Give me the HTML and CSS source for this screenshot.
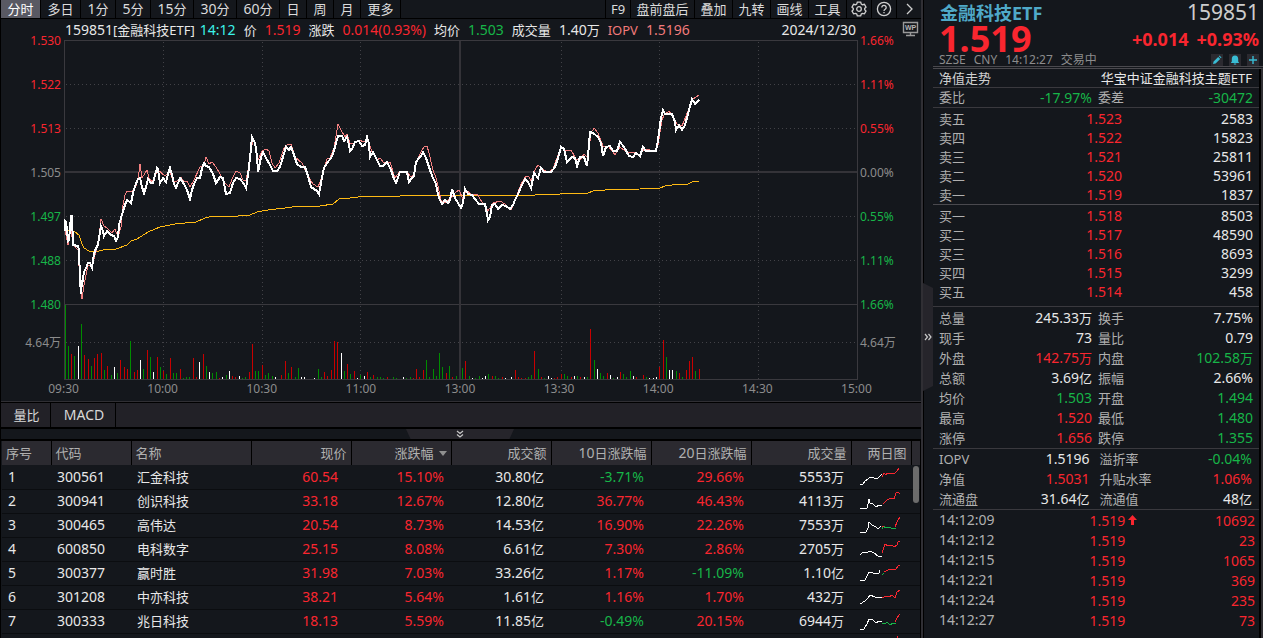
FILE: index.html
```html
<!DOCTYPE html>
<html lang="zh-CN">
<head>
<meta charset="utf-8">
<meta name="viewport" content="width=device-width, initial-scale=1">
<title>金融科技ETF 159851</title>
<link rel="stylesheet" href="styles.css">
</head>
<body>
<div class="terminal">
<main class="main">
  <nav class="toolbar">
    <button class="tool two active">分时</button><button class="tool two">多日</button><button class="tool mid"><span class="n">1</span>分</button><button class="tool mid"><span class="n">5</span>分</button><button class="tool long"><span class="n">15</span>分</button><button class="tool long"><span class="n">30</span>分</button><button class="tool long"><span class="n">60</span>分</button><button class="tool one">日</button><button class="tool one">周</button><button class="tool one">月</button><button class="tool two">更多</button>
    <span class="spacer"></span>
    <button class="tool small">F9</button><button class="tool wide">盘前盘后</button><button class="tool pair">叠加</button><button class="tool pair">九转</button><button class="tool pair">画线</button><button class="tool pair">工具</button>
    <button class="tool icon" aria-label="设置"><svg width="16" height="16" viewBox="0 0 16 16"><path d="M6.300 1.200h3.400l.6 1.900 1.100.6 2-.4 1.600 2.900-1.300 1.200v1.300l1.300 1.300-1.600 2.800-2-.4-1.100.6-.6 1.800H6.300l-.6-1.800-1.100-.6-2 .4L1 10l1.300-1.300V7.400L1 6.200l1.600-2.900 2 .4 1.100-.6z"/><circle cx="8" cy="8" r="2.300"/></svg></button>
    <button class="tool icon" aria-label="帮助"><svg width="16" height="16" viewBox="0 0 16 16"><circle cx="8" cy="8" r="6.600"/><path d="M5.800 6.500a2.200 2.100 0 1 1 3.400 1.700c-.8.5-1.200.8-1.200 1.700M8 11v1.300"/></svg></button>
    <button class="tool icon last" aria-label="展开"><svg width="16" height="16" viewBox="0 0 16 16"><path d="M6 3l5 5-5 5"/></svg></button>
  </nav>

  <section class="chart">
    <div class="axis axis-left"><span class="up">1.530</span><span class="up">1.522</span><span class="up">1.513</span><span>1.505</span><span class="down">1.497</span><span class="down">1.488</span><span class="down">1.480</span><span class="vol">4.64万</span></div>
    <div class="center">
      <div class="info">
        <span class="name"><span class="n">159851</span>[金融科技ETF]</span><span class="n cyan">14:12</span>
        <span>价</span><span class="n up">1.519</span><span>涨跌</span><span class="n up">0.014(0.93%)</span><span>均价</span><span class="n down">1.503</span><span>成交量</span><span><span class="n">1.40</span>万</span><span class="pink">IOPV</span><span class="n pink">1.5196</span>
        <time class="n date">2024/12/30</time>
      </div>
      <svg class="plot" viewBox="64 40 794 340" preserveAspectRatio="none" role="img" aria-label="分时走势图">
        <g class="dots"><path d="M66 84.500H857M66 128.500H857M66 216.500H857M66 260.500H857M66 342.500H857"/><path d="M163.500 42V379M262.500 42V379M360.500 42V379M561.500 42V379M659.500 42V379M758.500 42V379"/></g>
        <path class="frame" d="M64.500 379.500V40.500H857.500V379.500ZM64 304.500H857"/>
        <path class="axis-line" d="M65 172H857M460 41V379"/>
        <g class="bars" transform="translate(0 200) scale(.33333)">
          <path class="bar-up" d="M214 537V462M253 537V465M265 537V477M283 537V474M292 537V462M304 537V459M322 537V498M361 537V480M373 537V501M382 537V507M403 537V516M412 537V510M442 537V450M472 537V471M490 537V513M511 537V474M541 537V507M580 537V474M589 537V531M610 537V462M658 537V534M697 537V528M706 537V531M748 537V516M757 537V432M787 537V495M844 537V525M856 537V483M874 537V501M973 537V516M982 537V528M994 537V510M1003 537V423M1012 537V426M1042 537V492M1063 537V513M1102 537V516M1120 537V525M1162 537V531M1240 537V534M1249 537V507M1258 537V531M1271 537V510M1340 537V519M1358 537V531M1397 537V483M1478 537V528M1508 537V531M1547 537V510M1556 537V531M1565 537V534M1577 537V534M1604 537V453M1625 537V531M1664 537V534M1673 537V531M1685 537V522M1715 537V531M1742 537V531M1772 537V387M1823 537V519M1862 537V516M1910 537V531M1931 537V525M1979 537V501M1991 537V420M2039 537V519M2060 537V510M2069 537V483M2078 537V471M2099 537V507"/>
          <path class="bar-down" d="M196 537V315M205 537V438M223 537V468M244 537V372M274 537V498M313 537V510M334 537V525M352 537V519M391 537V423M430 537V507M451 537V471M481 537V501M499 537V522M520 537V519M529 537V519M550 537V534M559 537V531M568 537V531M619 537V498M637 537V519M649 537V516M679 537V525M727 537V534M736 537V531M766 537V513M775 537V513M796 537V525M805 537V519M817 537V528M865 537V519M886 537V531M895 537V504M955 537V507M964 537V531M1033 537V513M1051 537V522M1081 537V525M1111 537V531M1132 537V531M1141 537V531M1150 537V534M1180 537V531M1189 537V534M1219 537V534M1231 537V531M1280 537V480M1289 537V531M1301 537V507M1310 537V528M1319 537V459M1328 537V501M1349 537V498M1370 537V528M1388 537V504M1409 537V528M1427 537V534M1439 537V528M1466 537V522M1487 537V528M1496 537V534M1586 537V531M1595 537V525M1616 537V507M1634 537V534M1694 537V522M1703 537V528M1733 537V528M1763 537V531M1784 537V480M1802 537V519M1811 537V528M1841 537V534M1871 537V522M1880 537V531M1892 537V513M1940 537V531M2000 537V471M2030 537V513M2048 537V531M2087 537V513"/>
          <path class="bar-flat" d="M235 537V438M343 537V501M421 537V480M460 537V516M598 537V486M628 537V516M667 537V531M688 537V513M718 537V528M826 537V531M904 537V531M913 537V531M943 537V534M1024 537V459M1072 537V534M1093 537V528M1210 537V531M1418 537V534M1448 537V534M1457 537V528M1517 537V534M1535 537V531M1646 537V528M1655 537V534M1724 537V528M1754 537V531M1793 537V507M1832 537V525M1853 537V531M1901 537V528M1949 537V534M1961 537V534M1970 537V531M2009 537V510M2018 537V510"/>
        </g>
        <polyline class="avg" points="65,229 75,232 79,235 82,244 84,248 89,251 95,252 103,250 116,249 127,245 131,241 137,239 148,232 160,227 175,224 196,222 205,218 213,216 238,216 250,215 257,212 268,210 285,208 300,206 320,206 333,204 339,199 350,198 366,196 400,196 410,195 535,195 560,194 588,193 593,191 605,190 640,189 660,188 665,186 680,184 688,184 692,182 699,181"/>
        <polyline class="iopv" points="65,231 66,235 68,245 71,228 73,245 78,250 80,282 82,299 84,285 86,275 88,265 92,266 96,252 99,238 101,219 104,226 107,228 112,233 115,229 118,237 121,227 123,205 125,195 127,191 132,191 136,186 138,180 140,164 142,178 147,170 149,178 152,182 158,170 165,176 170,172 173,181 177,181 181,177 184,182 187,181 190,187 193,182 200,167 204,166 206,157 209,164 212,162 216,167 220,174 225,183 229,187 232,179 236,171 240,173 243,180 246,180 250,160 253,138 256,148 258,160 262,151 266,149 269,151 272,163 275,168 279,163 284,148 287,145 291,144 295,157 302,163 308,176 313,184 318,187 322,177 327,159 330,158 334,148 338,124 341,130 345,137 347,134 350,143 354,144 358,140 365,142 368,139 372,152 377,160 380,158 384,163 390,162 395,178 400,171 406,171 411,177 414,175 417,160 422,150 425,146 427,146 429,153 433,170 436,178 438,186 441,200 444,203 450,199 455,193 459,190 463,199 466,190 471,194 477,194 482,202 488,211 493,203 500,201 505,204 511,210 516,198 521,184 526,176 529,177 531,181 535,170 538,165 542,169 548,172 553,169 558,155 562,147 566,151 571,150 576,159 580,160 584,154 588,158 591,133 594,128 598,133 603,146 608,146 613,152 615,155 620,147 628,153 633,152 640,155 644,149 655,151 658,145 662,120 664,115 669,111 673,117 677,124 682,126 686,116 692,100 696,97 699,95"/>
        <polyline class="price" points="65,231 65,221 66,222 67,230 68,241 69,240 71,216 72,216 73,245 78,246 79,250 80,280 81,294 82,280 82,285 84,272 86,268 88,263 90,263 92,268 94,254 96,248 98,245 99,238 101,226 103,231 104,236 107,231 111,235 114,236 116,241 118,237 119,225 121,218 123,211 125,205 127,200 131,203 133,193 135,186 138,179 140,178 142,187 144,193 146,187 148,179 151,183 153,183 155,175 157,168 158,169 160,183 163,178 166,182 168,174 170,168 172,175 174,184 176,188 180,178 184,184 187,190 190,199 192,190 194,184 197,178 200,178 202,168 204,163 206,166 209,167 213,174 216,183 220,177 223,178 226,194 230,193 233,183 236,178 240,179 244,184 246,188 248,175 250,158 252,137 255,143 257,156 258,172 261,157 263,152 266,158 270,165 273,171 277,171 280,167 283,157 286,147 289,150 291,147 293,152 297,164 301,167 305,167 308,176 311,187 314,189 317,191 319,194 321,183 324,168 327,163 331,158 333,154 336,143 338,136 342,136 344,141 347,137 349,145 350,151 352,149 355,142 359,141 362,146 365,145 367,137 369,144 370,157 373,152 376,158 380,166 383,166 387,162 391,170 394,179 396,183 400,172 407,172 409,182 412,178 414,176 416,162 419,158 421,156 423,152 426,158 430,170 433,178 436,184 438,195 440,200 442,204 445,200 448,203 450,200 452,189 455,198 458,203 461,208 463,203 465,189 468,194 472,195 475,199 479,204 485,204 487,214 488,220 490,217 492,205 495,204 498,209 502,205 506,206 510,209 513,205 515,200 518,194 521,187 525,179 528,182 531,188 534,173 538,178 541,168 544,172 551,172 555,167 558,158 561,147 564,149 567,162 572,157 575,158 577,166 580,157 584,157 587,166 589,145 590,132 593,133 598,137 601,143 603,156 606,147 610,146 613,151 617,151 620,142 624,147 629,156 633,157 636,153 640,156 643,147 646,151 656,151 658,140 661,118 663,110 665,114 672,114 675,122 676,130 679,125 682,130 685,125 688,114 692,99 695,104 699,100"/>
      </svg>
    </div>
    <div class="axis axis-right"><span class="up">1.66%</span><span class="up">1.11%</span><span class="up">0.55%</span><span>0.00%</span><span class="down">0.55%</span><span class="down">1.11%</span><span class="down">1.66%</span><span class="vol">4.64万</span></div>
    <button class="wp" aria-label="WP"><svg width="18" height="17" viewBox="0 0 18 17"><path d="M1.500 1.500h14v10h-14zM8.500 12v2.500M4 14.500h9"/><text x="3" y="9">WP</text></svg></button>
  </section>
  <div class="times"><span>09:30</span><span>10:00</span><span>10:30</span><span>11:00</span><span>13:00</span><span>13:30</span><span>14:00</span><span>14:30</span><span>15:00</span></div>

  <div class="tabs"><button class="tab">量比</button><button class="tab macd">MACD</button></div>
  <div class="fold"><button aria-label="收起"><svg width="108" height="11" viewBox="0 0 108 11"><path class="fold-bg" d="M0 0h108l-5 11H5z"/><path class="fold-arrow" d="M51 2l3 2.500 3-2.500M51 5.500l3 2.500 3-2.500"/></svg></button></div>

  <section class="list">
    <table>
      <colgroup><col class="c-no"><col class="c-code"><col><col class="c-num"><col class="c-num"><col class="c-num"><col class="c-num"><col class="c-num"><col class="c-num"><col class="c-spark"><col class="c-bar"></colgroup>
      <thead><tr><th>序号</th><th>代码</th><th>名称</th><th>现价</th><th>涨跌幅<span class="sort"></span></th><th>成交额</th><th><span class="n">10</span>日涨跌幅</th><th><span class="n">20</span>日涨跌幅</th><th>成交量</th><th>两日图</th><th></th></tr></thead>
      <tbody>
      <tr><td>1</td><td>300561</td><td>汇金科技</td><td class="up">60.54</td><td class="up">15.10%</td><td>30.80<i>亿</i></td><td class="down">-3.71%</td><td class="up">29.66%</td><td>5553<i>万</i></td><td><svg viewBox="0 0 42 22"><path d="M1 19l3-1 2-3 3-2 2-2 4 1 3 1 3-3 2-2"/><path class="s-up" d="M23 11l2-4 2 2 1-2h8l2-2 2-3"/></svg></td><td></td></tr>
      <tr><td>2</td><td>300941</td><td>创识科技</td><td class="up">33.18</td><td class="up">12.67%</td><td>12.80<i>亿</i></td><td class="up">36.77%</td><td class="up">46.43%</td><td>4113<i>万</i></td><td><svg viewBox="0 0 42 22"><path d="M1 18h7l1-4 1-5 1 4 3 1 3 3 3-2h3"/><path class="s-up" d="M24 14l4-4 4-2 3 1 2-6 2-1 2 2"/></svg></td><td></td></tr>
      <tr><td>3</td><td>300465</td><td>高伟达</td><td class="up">20.54</td><td class="up">8.73%</td><td>14.53<i>亿</i></td><td class="up">16.90%</td><td class="up">22.26%</td><td>7553<i>万</i></td><td><svg viewBox="0 0 42 22"><path d="M1 18h6l2-4 1-6 3 3 4 2 2 2 3-3"/><path class="s-down" d="M23 15l1-3 3 2 3-1 2 1h5"/><path class="s-up" d="M36 13l2-5 3-5M23 13l2-1"/></svg></td><td></td></tr>
      <tr><td>4</td><td>600850</td><td>电科数字</td><td class="up">25.15</td><td class="up">8.08%</td><td>6.61<i>亿</i></td><td class="up">7.30%</td><td class="up">2.86%</td><td>2705<i>万</i></td><td><svg viewBox="0 0 42 22"><path d="M1 17l3-3 3 1 4-2 4 2 4 3h4"/><path class="s-up" d="M23 15l3-9 3 2 4-1 2 2 3-2 1-3 2-1"/></svg></td><td></td></tr>
      <tr><td>5</td><td>300377</td><td>赢时胜</td><td class="up">31.98</td><td class="up">7.03%</td><td>33.26<i>亿</i></td><td class="up">1.17%</td><td class="down">-11.09%</td><td>1.10<i>亿</i></td><td><svg viewBox="0 0 42 22"><path d="M1 18h5l2-4 2-4 4 1 3 1 3-1 1-3"/><path class="s-down" d="M23 13l2-2"/><path class="s-up" d="M25 10l4-2 4-1h4l2-3 2-1"/></svg></td><td></td></tr>
      <tr><td>6</td><td>301208</td><td>中亦科技</td><td class="up">38.21</td><td class="up">5.64%</td><td>1.61<i>亿</i></td><td class="up">1.16%</td><td class="up">1.70%</td><td>432<i>万</i></td><td><svg viewBox="0 0 42 22"><path d="M1 18l5-3 3-3 2-3 5 2 7 1"/><path class="s-up" d="M23 12l4-2 3 1 3-2 3 3 2-6 3-2"/></svg></td><td></td></tr>
      <tr><td>7</td><td>300333</td><td>兆日科技</td><td class="up">18.13</td><td class="up">5.59%</td><td>11.85<i>亿</i></td><td class="down">-0.49%</td><td class="up">20.15%</td><td>6944<i>万</i></td><td><svg viewBox="0 0 42 22"><path d="M1 19h4l3-5 2-5 4 1 3 3 3-2 3 1"/><path class="s-down" d="M23 13l3 1 2-2 3 3 3-2h3"/><path class="s-up" d="M36 12l2-4 2-3 1-1"/></svg></td><td></td></tr>
      <tr><td></td><td></td><td></td><td></td><td></td><td></td><td></td><td></td><td></td><td><svg viewBox="0 0 42 22"><path class="s-up" d="M37 11l2-9"/></svg></td><td></td></tr>
      </tbody>
    </table>
    <span class="thumb"></span>
  </section>
</main>

<aside class="quote">
  <button class="collapse" aria-label="收起侧栏"><svg width="10" height="108" viewBox="0 0 10 108"><path class="fold-bg" d="M0 0l10 5v98L0 108z"/><path class="fold-arrow" d="M2 51l2.500 3L2 57M5.500 51L8 54l-2.500 3"/></svg></button>
  <header>
    <div class="head-row"><h1>金融科技ETF</h1><span class="code">159851</span></div>
    <div class="head-row price-row"><strong class="last-price">1.519</strong><span class="delta"><b>+0.014</b><b>+0.93%</b></span></div>
    <div class="head-row meta"><span>SZSE</span><span>CNY</span><span>14:12:27</span><span class="state">交易中</span>
      <span class="spacer"></span>
      <button aria-label="编辑"><svg width="12" height="12" viewBox="0 0 12 12"><path d="M2 10l.6-2.500 4.600-4.600 2 2L4.600 9.400zM7.800 2.300l.7-.7 2 2-.7.700z"/></svg></button><button aria-label="提醒"><svg width="12" height="12" viewBox="0 0 12 12"><path d="M6 1.500c2.300 0 3.200 1.600 3.200 3.500v2.500L10.200 9H1.800l1-1.500V5C2.800 3.100 3.700 1.500 6 1.500zM4.800 9.500h2.400v1H4.800z"/></svg></button><button aria-label="添加"><svg width="12" height="12" viewBox="0 0 12 12"><path d="M5.300 2h1.400v3.300H10v1.400H6.700V10H5.300V6.700H2V5.300h3.300z"/></svg></button>
    </div>
  </header>
  <div class="body">
    <div class="fund"><a href="#nav">净值走势</a><span>华宝中证金融科技主题ETF</span></div>
    <dl class="pairs ratio"><dt>委比</dt><dd class="down">-17.97%</dd><dt>委差</dt><dd class="down">-30472</dd></dl>
    <table class="orders asks"><tbody><tr><th>卖五</th><td class="up">1.523</td><td>2583</td></tr><tr><th>卖四</th><td class="up">1.522</td><td>15823</td></tr><tr><th>卖三</th><td class="up">1.521</td><td>25811</td></tr><tr><th>卖二</th><td class="up">1.520</td><td>53961</td></tr><tr><th>卖一</th><td class="up">1.519</td><td>1837</td></tr></tbody></table>
    <table class="orders bids"><tbody><tr><th>买一</th><td class="up">1.518</td><td>8503</td></tr><tr><th>买二</th><td class="up">1.517</td><td>48590</td></tr><tr><th>买三</th><td class="up">1.516</td><td>8693</td></tr><tr><th>买四</th><td class="up">1.515</td><td>3299</td></tr><tr><th>买五</th><td class="up">1.514</td><td>458</td></tr></tbody></table>
    <dl class="pairs stats">
      <dt>总量</dt><dd>245.33<i>万</i></dd><dt>换手</dt><dd>7.75%</dd>
      <dt>现手</dt><dd>73</dd><dt>量比</dt><dd>0.79</dd>
      <dt>外盘</dt><dd class="up">142.75<i>万</i></dd><dt>内盘</dt><dd class="down">102.58<i>万</i></dd>
      <dt>总额</dt><dd>3.69<i>亿</i></dd><dt>振幅</dt><dd>2.66%</dd>
      <dt>均价</dt><dd class="down">1.503</dd><dt>开盘</dt><dd class="down">1.494</dd>
      <dt>最高</dt><dd class="up">1.520</dd><dt>最低</dt><dd class="down">1.480</dd>
      <dt>涨停</dt><dd class="up">1.656</dd><dt>跌停</dt><dd class="down">1.355</dd>
    </dl>
    <dl class="pairs nav" id="nav">
      <dt>IOPV</dt><dd>1.5196</dd><dt>溢折率</dt><dd class="down">-0.04%</dd>
      <dt>净值</dt><dd class="up">1.5031</dd><dt>升贴水率</dt><dd class="up">1.06%</dd>
      <dt>流通盘</dt><dd>31.64<i>亿</i></dd><dt>流通值</dt><dd>48<i>亿</i></dd>
    </dl>
    <table class="orders ticks"><tbody>
      <tr><th>14:12:09</th><td class="up">1.519</td><td class="up"><svg class="arrow" width="9" height="10" viewBox="0 0 9 10"><path d="M4.500 0L9 5H6v5H3V5H0z"/></svg>10692</td></tr>
      <tr><th>14:12:12</th><td class="up">1.519</td><td class="up">23</td></tr>
      <tr><th>14:12:15</th><td class="up">1.519</td><td class="up">1065</td></tr>
      <tr><th>14:12:21</th><td class="up">1.519</td><td class="up">369</td></tr>
      <tr><th>14:12:24</th><td class="up">1.519</td><td class="up">235</td></tr>
      <tr><th>14:12:27</th><td class="up">1.519</td><td class="up">73</td></tr>
    </tbody></table>
  </div>
</aside>
</div>
</body>
</html>
```
FILE: styles.css
```css
:root {
  --bg: #14171c;
  --head: #2b2a30;
  --bar: #222127;
  --line: #3a393e;
  --text: #e8e8e8;
  --label: #b0b0b0;
  --up: #f9262f;
  --down: #17b548;
}
* { box-sizing: border-box; }
body {
  margin: 0;
  background: var(--bg);
  color: var(--text);
  font: 13px/18px "Noto Sans", "Noto Sans CJK SC", sans-serif;
}
button { margin: 0; padding: 0; border: 0; background: none; color: inherit; font: inherit; cursor: pointer; }
svg { display: block; fill: none; }
i { font-style: normal; font-size: 13px; }
.n { font-size: 14px; }
.up { color: var(--up); }
.down { color: var(--down); }
.cyan { color: #3cf3e9; }
.pink { color: #f27b7b; }
.spacer { flex: 1; }

.terminal { display: flex; height: 100vh; overflow: hidden; }
.main { flex: 1; min-width: 0; display: flex; flex-direction: column; border-left: 1px solid #000; }

.toolbar { display: flex; height: 19px; border-bottom: 1px solid #000; flex: none; }
.tool { display: flex; align-items: center; justify-content: center; border-right: 1px solid #000; color: #dcdcdc; white-space: nowrap; }
.tool.active { background: #595963; color: #fff; }
.two { width: 40px; }
.mid { width: 35px; }
.long { width: 43px; }
.one { width: 27px; }
.small { width: 26px; border-left: 1px solid #000; }
.wide { width: 64px; }
.pair { width: 38px; }
.icon { width: 25px; }
.icon svg { stroke: #cfcfcf; stroke-width: 1.3; }
.last { width: 24px; border-right: 0; }

.chart { position: relative; display: grid; grid-template-columns: 63px 1fr 63px; flex: none; }
.axis { display: flex; flex-direction: column; color: #8c8c8c; font-size: 12px; }
.axis span { height: 44px; line-height: 44px; }
.axis .vol { height: 32px; line-height: 32px; }
.axis .up { color: var(--up); }
.axis .down { color: var(--down); }
.axis-left { text-align: right; padding-right: 3px; }
.axis-right { padding-left: 2px; }
.center { min-width: 0; }
.info { display: flex; align-items: center; gap: 8px; height: 21px; padding: 0 2px 0 1px; white-space: nowrap; }
.name { margin-right: -3px; }
.date { margin-left: auto; }
.plot { width: 100%; height: 340px; }
.plot * { vector-effect: non-scaling-stroke; shape-rendering: crispEdges; }
.dots { stroke: #424247; stroke-dasharray: 1 3; }
.frame { stroke: var(--line); }
.axis-line { stroke: #343338; stroke-width: 2; }
.bars { stroke-width: 1; }
.bar-up { stroke: #c80000; }
.bar-down { stroke: #008c00; }
.bar-flat { stroke: #fff; }
.avg { stroke: #ffba14; }
.iopv { stroke: #f28080; }
.price { stroke: #fff; stroke-width: 2; }
.wp { position: absolute; right: 1px; top: 2px; }
.wp path { stroke: #9a9a9a; stroke-width: 1.4; }
.wp text { fill: #b4b4b4; font: bold 7px "Liberation Sans", sans-serif; }
.times { display: grid; grid-template-columns: repeat(9, 1fr); height: 22px; padding: 0 15px 0 13px; border-bottom: 1px solid #302f34; color: #8c8c8c; font-size: 12px; text-align: center; flex: none; }

.tabs { display: flex; height: 27px; background: var(--bar); border: solid #000; border-width: 1px 0 2px; flex: none; }
.tab { width: 50px; padding-left: 2px; border-right: 1px solid #000; color: #d8d8d8; }
.macd { width: 65px; font-size: 14px; }
.fold { display: flex; justify-content: center; height: 12px; padding-right: 2px; border-bottom: 2px solid #000; flex: none; }
.fold button { height: 10px; overflow: hidden; }
.fold-bg { fill: #26252b; }
.fold-arrow { stroke: #c8c8c8; stroke-width: 1.2; }

.list { position: relative; flex: 1; min-height: 0; overflow: hidden; padding-left: 1px; border-right: 1px solid #000; }
.list table { width: 100%; table-layout: fixed; border-collapse: collapse; }
.c-no { width: 49px; }
.c-code { width: 80px; }
.c-num { width: 100px; }
.c-spark { width: 60px; }
.c-bar { width: 9px; }
.list th { height: 24px; padding: 0 4px; background: var(--head); border-right: 1px solid #000; color: var(--label); font-weight: 400; text-align: right; white-space: nowrap; }
.list th:nth-child(-n+3) { text-align: left; }
.list th:last-child { border-right: 0; padding: 0; }
.sort { display: inline-block; margin-left: 5px; border: 4px solid transparent; border-top: 5px solid #909090; border-bottom: 0; vertical-align: 2px; }
.list td { height: 24px; padding: 0 7px 0 6px; border-bottom: 1px solid #0b0d10; font-size: 14px; line-height: 18px; text-align: right; white-space: nowrap; }
.list td:nth-child(-n+3) { text-align: left; }
.list td:nth-child(3) { font-size: 13px; }
.list td:nth-child(4) { padding-right: 13px; }
.list td:nth-child(10) { padding: 0 8px; }
.list td svg { width: 42px; height: 22px; stroke: #fff; stroke-width: 1; shape-rendering: crispEdges; }
.list td .s-up { stroke: var(--up); }
.list td .s-down { stroke: var(--down); }
.thumb { position: absolute; right: 1px; top: 25px; width: 6px; height: 37px; border-radius: 3px; background: #6c6c6c; }

.quote { position: relative; width: 342px; flex: none; display: flex; flex-direction: column; padding-left: 10px; border-left: 2px solid #302f34; box-shadow: inset 1px 0 #000; }
.collapse { position: absolute; left: 0; top: 283px; }
.quote header { height: 67px; padding: 0 4px 0 6px; border-bottom: 1px solid #4a494e; }
.head-row { display: flex; justify-content: space-between; align-items: center; white-space: nowrap; }
h1 { margin: 0; padding-left: 1px; color: #4fa9c8; font-size: 18px; line-height: 24px; }
.code { color: #ccc; font-size: 21px; line-height: 25px; }
.price-row { height: 28px; }
.last-price { color: var(--up); font-size: 36px; line-height: 28px; }
.delta { display: flex; gap: 8px; color: var(--up); font-size: 18px; }
.meta { gap: 8px; height: 14px; color: #8c8c8c; font-size: 12px; line-height: 14px; }
.meta button { margin-left: -2px; background: var(--head); }
.meta svg { fill: #39bcd4; }
.body { flex: 1; margin-top: 1px; border-top: 1px solid #4a494e; border-right: 2px solid #302f34; box-shadow: inset -2px 0 #000; padding-right: 2px; }
.fund { display: flex; justify-content: space-between; height: 19px; padding: 0 7px 0 6px; border-bottom: 1px solid var(--line); line-height: 18px; }
.fund a { color: #d0d0d0; text-decoration: none; }
.pairs { display: grid; grid-template-columns: 38px 1fr 46px 1fr; margin: 0; padding: 0 6px; border-bottom: 1px solid var(--line); line-height: 20px; }
.pairs dt { color: var(--label); white-space: nowrap; }
.pairs dt:nth-of-type(even) { padding-left: 6px; }
.pairs dd { margin: 0; font-size: 14px; text-align: right; white-space: nowrap; }
.ratio { line-height: 19px; }
.stats { padding-top: 1px; }
.orders { width: 100%; border-collapse: separate; border-spacing: 0; table-layout: fixed; }
.orders tr { height: 19px; }
.orders th { padding: 0 0 0 6px; color: var(--label); font-weight: 400; text-align: left; width: 29%; }
.orders td { padding: 0; font-size: 14px; text-align: right; line-height: 19px; }
.orders td:nth-child(2) { width: 29%; }
.orders td:nth-child(3) { padding-right: 6px; }
.asks { padding-top: 1px; border-bottom: 1px solid #4a494e; }
.bids { padding: 1px 0 5px; border-bottom: 1px solid var(--line); }
.nav { padding: 0 7px 0 6px; }
.nav dd:nth-of-type(odd) { padding-right: 2px; }
.nav dt:nth-of-type(even) { padding-left: 8px; }
.ticks tr { height: 20px; }
.ticks th { font-size: 14px; }
.ticks td:nth-child(2) { width: 30%; }
.ticks td:nth-child(3) { padding-right: 4px; }
.arrow { float: left; margin: 4px 0 0 3px; fill: var(--up); }
```
